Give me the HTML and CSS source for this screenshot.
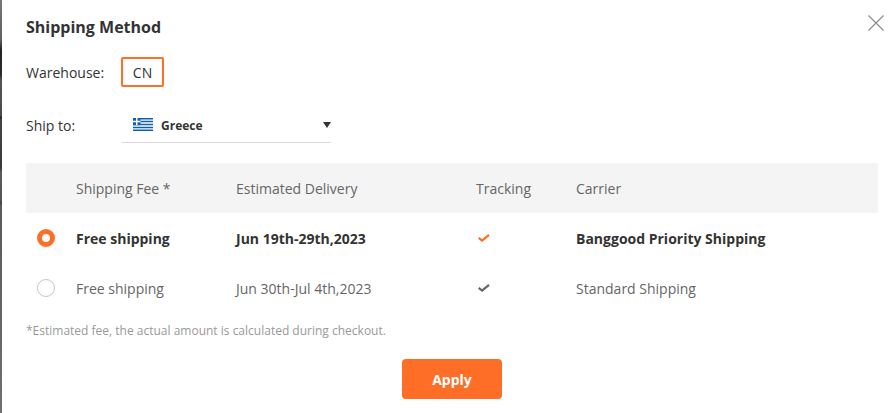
FILE: index.html
```
<!DOCTYPE html>
<html lang="en">
<head>
  <meta charset="UTF-8">
  <title>Shipping Method</title>
  <link rel="stylesheet" href="styles.css">
</head>
<body>

  <div class="modal">
    <svg class="close" viewBox="0 0 16 16"><path d="M.5.5l15 15M15.5.5l-15 15"/></svg>

    <h2 class="title">Shipping Method</h2>

    <div class="row warehouse">
      <span class="label">Warehouse:</span>
      <span class="tag">CN</span>
    </div>

    <div class="row ship-to">
      <span class="label">Ship to:</span>
      <div class="select">
        <svg class="flag" viewBox="0 0 20 13" preserveAspectRatio="none">
          <path fill="#fff" d="M0 0h20v13H0z"/>
          <path stroke="#0f5eb5" stroke-width="1.5" d="M0 .72h20M0 3.6h20M0 6.5h20M0 9.4h20M0 12.28h20"/>
          <path fill="#0f5eb5" d="M0 0h7.5v7.2H0z"/>
          <path stroke="#fff" stroke-width="1.5" d="M3.75 0v7.2M0 3.6h7.5"/>
        </svg>
        <span class="country">Greece</span>
        <span class="arrow"></span>
      </div>
    </div>

    <div class="table">
      <div class="tr head">
        <span class="radio-cell"></span>
        <span class="fee">Shipping Fee *</span>
        <span class="delivery">Estimated Delivery</span>
        <span class="tracking">Tracking</span>
        <span class="carrier">Carrier</span>
      </div>
      <div class="tr active">
        <span class="radio-cell"><i class="radio"></i></span>
        <span class="fee">Free shipping</span>
        <span class="delivery">Jun 19th-29th,2023</span>
        <span class="tracking"><svg class="check" viewBox="0 0 12 8"><path d="M.7 3.9l3.4 2.7L11 .9"/></svg></span>
        <span class="carrier">Banggood Priority Shipping</span>
      </div>
      <div class="tr">
        <span class="radio-cell"><i class="radio"></i></span>
        <span class="fee">Free shipping</span>
        <span class="delivery">Jun 30th-Jul 4th,2023</span>
        <span class="tracking"><svg class="check" viewBox="0 0 12 8"><path d="M.7 3.9l3.4 2.7L11 .9"/></svg></span>
        <span class="carrier">Standard Shipping</span>
      </div>
    </div>

    <p class="note">*Estimated fee, the actual amount is calculated during checkout.</p>

    <button class="apply">Apply</button>
  </div>

</body>
</html>
```

FILE: styles.css
```
* {
  margin: 0;
  padding: 0;
  box-sizing: border-box;
}

body {
  height: 413px;
  overflow: hidden;
  background: linear-gradient(#777 0, #606060 40px, #222 50px, #2b2b2b 75px, #555 80px, #4a4a4a 116px, #222 117px, #444 120px, #3a3a3a 168px, #5a5a5a 172px, #555 200px, #444 203px, #5a5a5a 206px, #707070 413px);
  padding-left: 2px;
  font-family: 'Open Sans', sans-serif;
  font-size: 14px;
  color: #333;
}

.modal {
  position: relative;
  height: 413px;
  padding: 16px 12px 0 24px;
  background: #fff;
}

.close {
  position: absolute;
  top: 15px;
  right: 6px;
  width: 16px;
  height: 16px;
  fill: none;
  stroke: #8c8c90;
  stroke-width: 1.2;
}

.title {
  font-size: 16px;
  line-height: 22px;
  font-weight: 700;
}

.row {
  display: flex;
  align-items: center;
}

.label {
  width: 95px;
}

.warehouse {
  height: 30px;
  margin-top: 19px;
}

.tag {
  width: 43px;
  height: 30px;
  line-height: 28px;
  text-align: center;
  border: 2px solid #ff6e26;
  border-radius: 2px;
}

.ship-to {
  height: 34px;
  margin-top: 22px;
}

.ship-to .label {
  padding-bottom: 2px;
}

.select {
  display: flex;
  align-items: center;
  width: 210px;
  height: 34px;
  padding-left: 12px;
  border-bottom: 1px solid #d8d8dc;
  border-radius: 2px;
}

.flag {
  width: 20px;
  height: 13px;
  margin-bottom: 2px;
}

.country {
  flex: 1;
  margin-left: 8px;
  font-size: 12px;
  font-weight: 700;
}

.arrow {
  margin-bottom: 1px;
  border: 4px solid transparent;
  border-top: 6px solid #333;
  border-bottom: 0;
}

.table {
  margin-top: 20px;
}

.tr {
  display: flex;
  align-items: center;
  height: 50px;
  color: #666;
}

.head {
  background: #f4f4f4;
}

.active {
  color: #333;
  font-weight: 700;
}

.radio-cell {
  width: 50px;
  padding-left: 11px;
}

.fee {
  width: 160px;
}

.delivery {
  width: 240px;
}

.tracking {
  width: 100px;
}

.radio {
  display: block;
  width: 18px;
  height: 18px;
  border: 1px solid #c4c4cc;
  border-radius: 50%;
}

.active .radio {
  border: 5px solid #ff6e26;
}

.check {
  display: block;
  width: 12px;
  height: 8px;
  margin: 0 0 1px 2px;
  fill: none;
  stroke: #666;
  stroke-width: 2.2;
}

.active .check {
  stroke: #ff6e26;
}

.note {
  margin-top: 9px;
  font-size: 12px;
  line-height: 18px;
  color: #999;
}

.apply {
  display: block;
  width: 100px;
  height: 40px;
  margin: 19px 0 0 376px;
  border: 0;
  border-radius: 4px;
  background: #ff6e26;
  color: #fff;
  font: 700 14px 'Open Sans', sans-serif;
}
```
